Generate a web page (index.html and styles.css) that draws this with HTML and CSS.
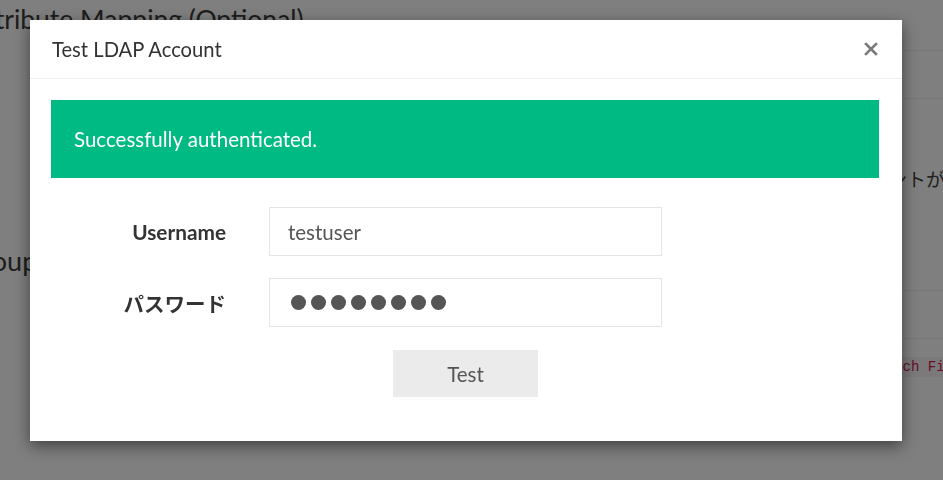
FILE: index.html
```html
<!DOCTYPE html>
<html lang="ja">
<head>
  <meta charset="UTF-8" />
  <meta name="viewport" content="width=device-width, initial-scale=1.0"/>
  <title>LDAP Settings</title>
  <link rel="stylesheet" href="styles.css">
</head>
<body>
  <div class="page">
    <h2 class="section-title">Attribute Mapping (Optional)</h2>
    <div class="settings">
      <div class="setting-row">
        <div class="setting-label"></div>
        <div class="setting-value"></div>
      </div>
      <div class="setting-row tall">
        <div class="setting-label group-label">Group</div>
        <div class="setting-value"><span class="hint">このアカウントが所属するグループ</span></div>
      </div>
      <div class="setting-row">
        <div class="setting-label"></div>
        <div class="setting-value"></div>
      </div>
      <div class="setting-row">
        <div class="setting-label"></div>
        <div class="setting-value"><code>Search Filter</code></div>
      </div>
    </div>
  </div>

  <div class="backdrop">
    <div class="modal">
      <div class="modal-header">
        <h4 class="modal-title">Test LDAP Account</h4>
        <button class="close" type="button" aria-label="Close">
          <svg width="14" height="14" viewBox="0 0 14 14">
            <path d="M2 2 L12 12 M12 2 L2 12" stroke="#7a7a7a" stroke-width="2.6" stroke-linecap="square"/>
          </svg>
        </button>
      </div>
      <div class="modal-body">
        <div class="alert-success">Successfully authenticated.</div>
        <form class="test-form">
          <label class="form-label" for="username">Username</label>
          <input class="field" id="username" type="text" value="testuser">
          <label class="form-label jp" for="password">パスワード</label>
          <div class="field password" id="password">
            <span class="dot"></span><span class="dot"></span><span class="dot"></span><span class="dot"></span>
            <span class="dot"></span><span class="dot"></span><span class="dot"></span><span class="dot"></span>
          </div>
          <button class="btn-test" type="button">Test</button>
        </form>
      </div>
    </div>
  </div>
</body>
</html>
```

FILE: styles.css
```css
body {
  margin: 0;
  padding: 0;
  background-color: #ffffff;
  font-family: 'Lato', 'Noto Sans CJK JP', sans-serif;
  color: #333333;
  overflow: hidden;
}

.page {
  margin-left: -27px;
}

.section-title {
  margin: 0 0 0 -4px;
  padding-top: 2px;
  font-size: 26.5px;
  font-weight: 400;
  line-height: 34px;
  color: #3a3a3a;
}

.settings {
  margin-top: 14px;
}

.setting-row {
  display: grid;
  grid-template-columns: 1fr 172px;
  height: 48px;
}

.setting-row.tall {
  height: 192px;
}

.setting-label {
  font-size: 27px;
  color: #3a3a3a;
}

.group-label {
  margin-left: -10px;
  padding-top: 146px;
}

.setting-value {
  overflow: hidden;
  white-space: nowrap;
  border-top: 1px solid #efefef;
}

.hint {
  display: block;
  padding-top: 66px;
  padding-left: 22px;
  font-size: 19px;
  color: #444444;
}

code {
  display: inline-block;
  margin-top: 18px;
  margin-left: 94px;
  padding: 2px 4px;
  font-family: 'Liberation Mono', monospace;
  font-size: 14px;
  color: #c7254e;
  background-color: #f9f2f4;
}

.backdrop {
  position: fixed;
  inset: 0;
  background-color: rgba(0, 0, 0, 0.5);
}

.modal {
  position: absolute;
  top: 20px;
  left: 30px;
  width: 872px;
  background-color: #ffffff;
  box-shadow: 0 5px 15px rgba(0, 0, 0, 0.5);
}

.modal-header {
  display: flex;
  align-items: center;
  justify-content: space-between;
  padding: 15px 24px 15px 22px;
  border-bottom: 1px solid #eeeeee;
}

.modal-title {
  margin: 0;
  font-size: 20.2px;
  font-weight: 400;
  line-height: 28px;
  color: #333333;
}

.close {
  display: flex;
  padding: 0;
  border: none;
  background: none;
  cursor: pointer;
}

.modal-body {
  padding: 21px 23px 44px 21px;
}

.alert-success {
  display: flex;
  align-items: center;
  height: 78px;
  padding: 0 23px;
  background-color: #00ba84;
  color: #ffffff;
  font-size: 20.5px;
}

.test-form {
  display: grid;
  grid-template-columns: 175px 393px;
  column-gap: 43px;
  row-gap: 22px;
  margin-top: 29px;
}

.form-label {
  align-self: center;
  text-align: right;
  font-size: 20.8px;
  font-weight: 700;
  color: #333333;
}

.form-label.jp {
  font-family: 'Noto Sans CJK JP', sans-serif;
  font-size: 20.5px;
}

.field {
  box-sizing: border-box;
  height: 49px;
  margin: 0;
  padding: 0 18px;
  border: 1px solid #e4e4e4;
  font-family: 'Lato', sans-serif;
  font-size: 20.5px;
  color: #555555;
  background-color: #ffffff;
  outline: none;
}

.field.password {
  display: flex;
  align-items: center;
  gap: 5px;
  padding-left: 21px;
}

.dot {
  width: 15px;
  height: 15px;
  border-radius: 50%;
  background-color: #555555;
}

.btn-test {
  grid-column: 2;
  justify-self: center;
  width: 145px;
  height: 47px;
  margin-top: 1px;
  border: none;
  background-color: #ebebeb;
  font-family: 'Lato', sans-serif;
  font-size: 20.5px;
  color: #555555;
  cursor: pointer;
}
```
